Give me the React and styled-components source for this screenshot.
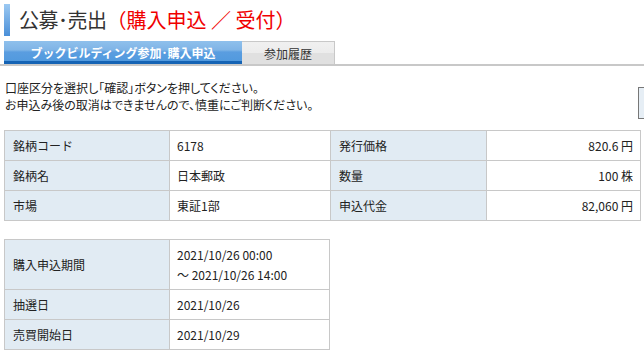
import React from "react";
import styled, { createGlobalStyle } from "styled-components";

const Global = createGlobalStyle`
  html, body { margin: 0; padding: 0; overflow: hidden; background: #fff; }
  body { font-family: "Noto Sans CJK JP", "Noto Sans", sans-serif; color: #333; }
`;

const Page = styled.div`
  width: 644px;
  padding-top: 4px;
`;

const TitleRow = styled.div`
  display: flex;
  align-items: center;
  gap: 9px;
  margin-left: 4px;
  height: 32px;
`;

const TitleBar = styled.div`
  width: 6px;
  height: 32px;
  background: linear-gradient(#9cc9f2, #4a8fd8);
`;

const Title = styled.h1`
  margin: 0;
  font-size: 20px;
  font-weight: normal;
  line-height: 32px;
  color: #333;
  letter-spacing: -0.5px;
`;

const Red = styled.span`
  color: #f00000;
  letter-spacing: 0;
`;

const TabBar = styled.div`
  display: flex;
  margin-top: 5px;
  padding-left: 4px;
  border-bottom: 2px solid #c8c8c8;
  height: 23px;
`;

const Tab = styled.div`
  box-sizing: border-box;
  height: 23px;
  display: flex;
  align-items: center;
  justify-content: center;
  font-size: 12px;
  width: ${(p) => p.$w}px;
  ${(p) =>
    p.$active
      ? `
    background: linear-gradient(#8fc0ec 0%, #7fb4e6 45%, #5a9de0 55%, #529ade 100%);
    color: #fff;
    font-weight: bold;
    border-bottom: 3px solid #1563b4;
    padding-top: 2px;
  `
      : `
    background: linear-gradient(#f0f0f0 0%, #ececec 50%, #e0e0e0 51%, #e0e0e0 100%);
    color: #333;
    border-top: 1px solid #c8c8c8;
    border-right: 1px solid #c8c8c8;
  `}
`;

const Notice = styled.div`
  display: flex;
  align-items: flex-start;
  justify-content: space-between;
  margin-top: 13px;
  padding-left: 5px;
`;

const NoticeText = styled.p`
  margin: 0;
  font-size: 12px;
  line-height: 17px;
  font-feature-settings: "palt";
  color: #222;
`;

const SideButton = styled.div`
  box-sizing: border-box;
  width: 60px;
  height: 32px;
  margin-right: -54px;
  margin-top: 8px;
  margin-bottom: -6px;
  border: 1px solid #777;
  background: #e6eef5;
`;

const Table = styled.table`
  border-collapse: collapse;
  margin-left: 4px;
  margin-top: ${(p) => p.$mt}px;
  font-size: 12px;
  color: #222;
  table-layout: fixed;
`;

const Label = styled.th`
  border: 1px solid #c8c8c8;
  background: #e1ebf3;
  font-weight: normal;
  text-align: left;
  padding: 0 8px;
  height: 30px;
  width: ${(p) => p.$w}px;
  box-sizing: border-box;
`;

const Value = styled.td`
  border: 1px solid #c8c8c8;
  background: #fff;
  padding: 0 7px;
  height: 30px;
  width: ${(p) => p.$w}px;
  box-sizing: border-box;
  text-align: ${(p) => (p.$right ? "right" : "left")};
  line-height: ${(p) => (p.$tall ? "20px" : "normal")};
`;

const TallLabel = styled(Label)`
  height: 50px;
`;

export default function App() {
  return (
    <Page>
      <Global />
      <TitleRow>
        <TitleBar />
        <Title>
          公募･売出<Red>（購入申込 ／ 受付）</Red>
        </Title>
      </TitleRow>
      <TabBar>
        <Tab $active $w={238}>ブックビルディング参加･購入申込</Tab>
        <Tab $w={93}>参加履歴</Tab>
      </TabBar>
      <Notice>
        <NoticeText>
          口座区分を選択し「確認」ボタンを押してください。
          <br />
          お申込み後の取消はできませんので、慎重にご判断ください。
        </NoticeText>
        <SideButton />
      </Notice>
      <Table $mt={17}>
        <tbody>
          <tr>
            <Label $w={165}>銘柄コード</Label>
            <Value $w={161}>6178</Value>
            <Label $w={156}>発行価格</Label>
            <Value $w={154} $right>820.6 円</Value>
          </tr>
          <tr>
            <Label>銘柄名</Label>
            <Value>日本郵政</Value>
            <Label>数量</Label>
            <Value $right>100 株</Value>
          </tr>
          <tr>
            <Label>市場</Label>
            <Value>東証1部</Value>
            <Label>申込代金</Label>
            <Value $right>82,060 円</Value>
          </tr>
        </tbody>
      </Table>
      <Table $mt={18}>
        <tbody>
          <tr>
            <TallLabel $w={165}>購入申込期間</TallLabel>
            <Value $w={160} $tall>
              2021/10/26 00:00
              <br />～ 2021/10/26 14:00
            </Value>
          </tr>
          <tr>
            <Label>抽選日</Label>
            <Value>2021/10/26</Value>
          </tr>
          <tr>
            <Label>売買開始日</Label>
            <Value>2021/10/29</Value>
          </tr>
        </tbody>
      </Table>
    </Page>
  );
}
